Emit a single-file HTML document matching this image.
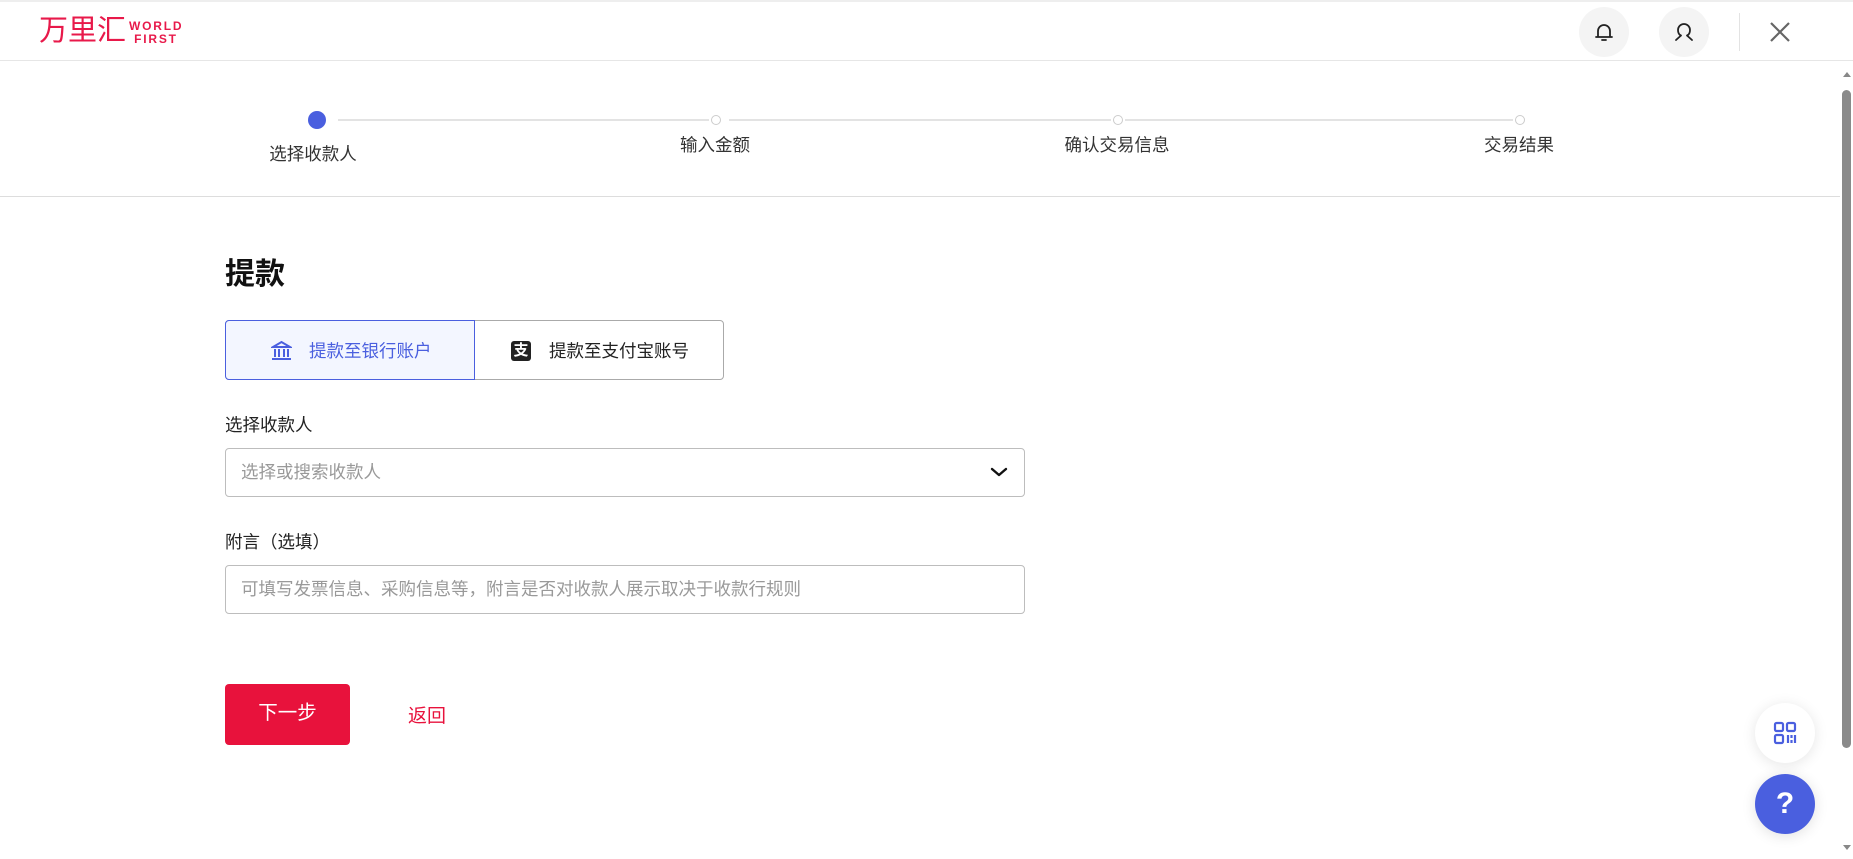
<!DOCTYPE html>
<html><head><meta charset="utf-8"><style>
*{margin:0;padding:0;box-sizing:border-box}
body{width:1853px;height:859px;overflow:hidden;background:#fff;font-family:"Liberation Sans","Noto Sans CJK SC",sans-serif;color:#222;position:relative}
.abs{position:absolute}
.hdr{left:0;top:0;width:1853px;height:61px;border-top:2px solid #eee;border-bottom:1px solid #e6e6e6;background:#fff}
.circ{width:50px;height:50px;border-radius:50%;background:#f4f4f4;top:7px}
.step{font-size:17.5px;color:#333;transform:translateX(-50%);white-space:nowrap}
.dot{width:10px;height:10px;border-radius:50%;border:1.5px solid #ccc;background:#fff;top:115px}
.line{height:2px;background:#e3e3e3;top:119px}
.inp{border:1px solid #bdbdbd;border-radius:4px;left:225px;width:800px;height:49px;font-size:17.5px;color:#999;padding-left:15px;line-height:47px}
.lbl{left:225px;font-size:17.5px;color:#222}
</style></head><body>
<div class="abs hdr"></div>
<div class="abs" style="left:39px;top:13px;color:#e8194a;font-size:29px;line-height:36px;letter-spacing:0px">万里汇</div>
<div class="abs" style="left:129px;top:20px;color:#e8194a;font-size:12px;font-weight:bold;line-height:13px;letter-spacing:1.8px">WORLD<br>&nbsp;FIRST</div>
<div class="abs circ" style="left:1579px"></div>
<svg class="abs" style="left:1592px;top:20px" width="24" height="24" viewBox="0 0 24 24" fill="none" stroke="#222" stroke-width="1.8" stroke-linecap="round" stroke-linejoin="round"><path d="M6 17V11a6 6 0 0 1 12 0v6M4 17h16M10 20h4"/></svg>
<div class="abs circ" style="left:1659px"></div>
<svg class="abs" style="left:1672px;top:20px" width="24" height="24" viewBox="0 0 24 24" fill="none" stroke="#222" stroke-width="1.8" stroke-linecap="round" stroke-linejoin="round"><path d="M9 15.5C6.5 14.5 6 12 6 10a6 6 0 0 1 12 0c0 2-.5 4.5-3 5.5M9 15.5L4 20M15 15.5l5 4.5"/></svg>
<div class="abs" style="left:1739px;top:13px;width:1px;height:38px;background:#e3e3e3"></div>
<svg class="abs" style="left:1769px;top:21px" width="22" height="22" viewBox="0 0 22 22" stroke="#666" stroke-width="2.2"><path d="M2 2L20 20M20 2L2 20"/></svg>

<div class="abs line" style="left:338px;width:371px"></div>
<div class="abs line" style="left:729px;width:382px"></div>
<div class="abs line" style="left:1125px;width:388px"></div>
<div class="abs" style="left:308px;top:111px;width:18px;height:18px;border-radius:50%;background:#4a5fdf"></div>
<div class="abs dot" style="left:711px"></div>
<div class="abs dot" style="left:1113px"></div>
<div class="abs dot" style="left:1515px"></div>
<div class="abs step" style="left:313px;top:141px">选择收款人</div>
<div class="abs step" style="left:715px;top:132px">输入金额</div>
<div class="abs step" style="left:1117px;top:132px">确认交易信息</div>
<div class="abs step" style="left:1519px;top:132px">交易结果</div>
<div class="abs" style="left:0;top:196px;width:1840px;height:1px;background:#ddd"></div>

<div class="abs" style="left:225px;top:249px;font-size:30px;font-weight:bold;color:#111">提款</div>

<div class="abs" style="left:225px;top:320px;width:499px;height:60px;border:1px solid #aaa;border-radius:4px"></div>
<div class="abs" style="left:225px;top:320px;width:250px;height:60px;border:1px solid #4a5fdf;border-radius:4px 0 0 4px;background:#f3f6ff"></div>
<svg class="abs" style="left:271px;top:340px" width="21" height="21" viewBox="0 0 21 21" fill="none" stroke="#4a5fdf" stroke-width="2"><path d="M2 7L10.5 2 19 7ZM4 9v8M8 9v8M13 9v8M17 9v8M1 19h19"/></svg>
<div class="abs" style="left:309px;top:338px;font-size:17.5px;color:#4a5fdf">提款至银行账户</div>
<div class="abs" style="left:511px;top:341px;width:20px;height:20px;border-radius:3px;background:#222;color:#fff;font-size:15px;line-height:20px;text-align:center;font-weight:bold">支</div>
<div class="abs" style="left:549px;top:338px;font-size:17.5px;color:#222">提款至支付宝账号</div>

<div class="abs lbl" style="top:412px">选择收款人</div>
<div class="abs inp" style="top:448px">选择或搜索收款人</div>
<svg class="abs" style="left:989px;top:465px" width="20" height="14" viewBox="0 0 20 14" fill="none" stroke="#111" stroke-width="2.4" stroke-linecap="round" stroke-linejoin="round"><path d="M3 4l7 6 7-6"/></svg>

<div class="abs lbl" style="top:529px">附言（选填）</div>
<div class="abs inp" style="top:565px">可填写发票信息、采购信息等，附言是否对收款人展示取决于收款行规则</div>

<div class="abs" style="left:225px;top:684px;width:125px;height:61px;border-radius:4px;background:#e8123c;color:#fff;font-size:19.5px;line-height:59px;text-align:center">下一步</div>
<div class="abs" style="left:408px;top:701px;font-size:19px;color:#e8123c">返回</div>

<div class="abs" style="left:1840px;top:61px;width:13px;height:798px;background:#fff"></div>
<div class="abs" style="left:1843px;top:72px;width:0;height:0;border-left:4px solid transparent;border-right:4px solid transparent;border-bottom:5px solid #888"></div>
<div class="abs" style="left:1842px;top:90px;width:9px;height:658px;border-radius:5px;background:#8a8a8a"></div>
<div class="abs" style="left:1843px;top:845px;width:0;height:0;border-left:4px solid transparent;border-right:4px solid transparent;border-top:5px solid #888"></div>

<div class="abs" style="left:1755px;top:703px;width:60px;height:60px;border-radius:50%;background:#fff;box-shadow:0 2px 14px rgba(0,0,0,.1)"></div>
<svg class="abs" style="left:1773px;top:721px" width="24" height="24" viewBox="0 0 24 24" fill="none" stroke="#4a5fdf" stroke-width="2.2"><rect x="2" y="2" width="8" height="8" rx="1.5"/><rect x="14" y="2" width="8" height="8" rx="1.5"/><rect x="2" y="14" width="8" height="8" rx="1.5"/><path d="M15 14v8M18.5 14v3M18.5 19v3M22 14v8"/></svg>
<div class="abs" style="left:1755px;top:774px;width:60px;height:60px;border-radius:50%;background:#4a5fdf;box-shadow:0 2px 14px rgba(0,0,0,.12);color:#fff;font-size:30px;font-weight:bold;line-height:60px;text-align:center">?</div>
</body></html>
